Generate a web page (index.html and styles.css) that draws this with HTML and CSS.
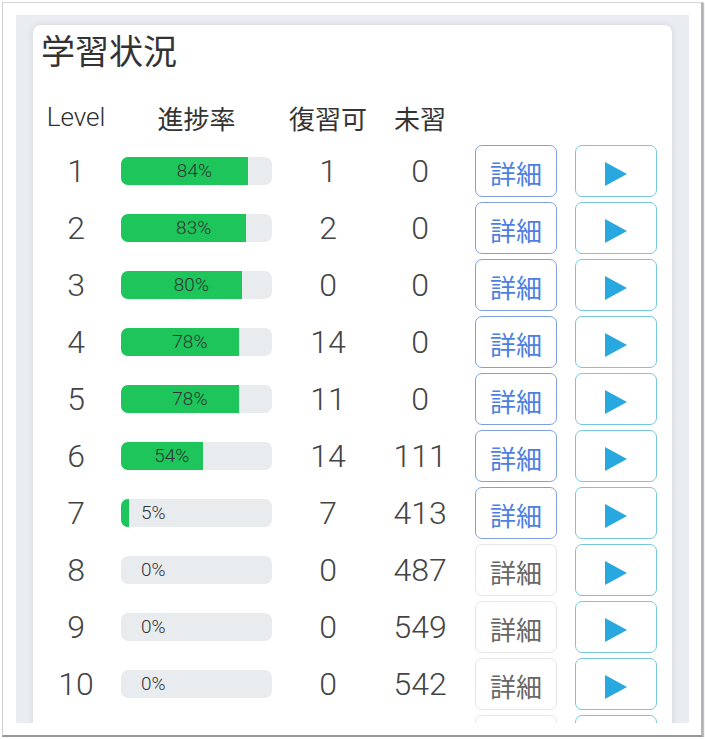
FILE: index.html
```html
<!DOCTYPE html>
<html lang="ja">
<head>
<meta charset="utf-8">
<link rel="stylesheet" href="styles.css">
</head>
<body>
<div class="frame">
  <div class="panel">
    <div class="card">
      <h1 class="title">学習状況</h1>
      <div class="row head">
        <div class="h-level">Level</div>
        <div>進捗率</div>
        <div>復習可</div>
        <div>未習</div>
        <div></div>
        <div></div>
      </div>

      <div class="row">
        <div class="num">1</div>
        <div class="bar" style="--p:84%"><div class="fill"></div><div class="lbl">84%</div></div>
        <div class="num">1</div>
        <div class="num">0</div>
        <button class="btn detail">詳細</button>
        <button class="btn play"><svg width="22" height="24" viewBox="0 0 22 24"><polygon points="0,0 22,12 0,24"/></svg></button>
      </div>
      <div class="row">
        <div class="num">2</div>
        <div class="bar" style="--p:83%"><div class="fill"></div><div class="lbl">83%</div></div>
        <div class="num">2</div>
        <div class="num">0</div>
        <button class="btn detail">詳細</button>
        <button class="btn play"><svg width="22" height="24" viewBox="0 0 22 24"><polygon points="0,0 22,12 0,24"/></svg></button>
      </div>
      <div class="row">
        <div class="num">3</div>
        <div class="bar" style="--p:80%"><div class="fill"></div><div class="lbl">80%</div></div>
        <div class="num">0</div>
        <div class="num">0</div>
        <button class="btn detail">詳細</button>
        <button class="btn play"><svg width="22" height="24" viewBox="0 0 22 24"><polygon points="0,0 22,12 0,24"/></svg></button>
      </div>
      <div class="row">
        <div class="num">4</div>
        <div class="bar" style="--p:78%"><div class="fill"></div><div class="lbl">78%</div></div>
        <div class="num">14</div>
        <div class="num">0</div>
        <button class="btn detail">詳細</button>
        <button class="btn play"><svg width="22" height="24" viewBox="0 0 22 24"><polygon points="0,0 22,12 0,24"/></svg></button>
      </div>
      <div class="row">
        <div class="num">5</div>
        <div class="bar" style="--p:78%"><div class="fill"></div><div class="lbl">78%</div></div>
        <div class="num">11</div>
        <div class="num">0</div>
        <button class="btn detail">詳細</button>
        <button class="btn play"><svg width="22" height="24" viewBox="0 0 22 24"><polygon points="0,0 22,12 0,24"/></svg></button>
      </div>
      <div class="row">
        <div class="num">6</div>
        <div class="bar" style="--p:54%"><div class="fill"></div><div class="lbl">54%</div></div>
        <div class="num">14</div>
        <div class="num">111</div>
        <button class="btn detail">詳細</button>
        <button class="btn play"><svg width="22" height="24" viewBox="0 0 22 24"><polygon points="0,0 22,12 0,24"/></svg></button>
      </div>
      <div class="row">
        <div class="num">7</div>
        <div class="bar" style="--p:5%"><div class="fill"></div><div class="lbl">5%</div></div>
        <div class="num">7</div>
        <div class="num">413</div>
        <button class="btn detail">詳細</button>
        <button class="btn play"><svg width="22" height="24" viewBox="0 0 22 24"><polygon points="0,0 22,12 0,24"/></svg></button>
      </div>
      <div class="row">
        <div class="num">8</div>
        <div class="bar" style="--p:0%"><div class="fill"></div><div class="lbl">0%</div></div>
        <div class="num">0</div>
        <div class="num">487</div>
        <button class="btn detail off">詳細</button>
        <button class="btn play"><svg width="22" height="24" viewBox="0 0 22 24"><polygon points="0,0 22,12 0,24"/></svg></button>
      </div>
      <div class="row">
        <div class="num">9</div>
        <div class="bar" style="--p:0%"><div class="fill"></div><div class="lbl">0%</div></div>
        <div class="num">0</div>
        <div class="num">549</div>
        <button class="btn detail off">詳細</button>
        <button class="btn play"><svg width="22" height="24" viewBox="0 0 22 24"><polygon points="0,0 22,12 0,24"/></svg></button>
      </div>
      <div class="row">
        <div class="num">10</div>
        <div class="bar" style="--p:0%"><div class="fill"></div><div class="lbl">0%</div></div>
        <div class="num">0</div>
        <div class="num">542</div>
        <button class="btn detail off">詳細</button>
        <button class="btn play"><svg width="22" height="24" viewBox="0 0 22 24"><polygon points="0,0 22,12 0,24"/></svg></button>
      </div>
      <div class="row">
        <div></div>
        <div></div>
        <div></div>
        <div></div>
        <button class="btn detail off"></button>
        <button class="btn play"></button>
      </div>
    </div>
  </div>
</div>
</body>
</html>
```

FILE: styles.css
```css
html, body {
  margin: 0;
  padding: 0;
  background: #ffffff;
}

body {
  font-family: Roboto, "Noto Sans CJK JP", sans-serif;
  color: #333333;
}

.frame {
  box-sizing: border-box;
  width: 701px;
  height: 735px;
  margin: 2px 0 0 2px;
  padding: 12px 11px 10px 13px;
  background: #ffffff;
  border-top: 1px solid #d6d6d6;
  border-left: 1px solid #cfcfcf;
  border-right: 2px solid #b4b4b4;
  border-bottom: 2px solid #979797;
  box-shadow: 1px 1px 1px rgba(0, 0, 0, 0.25);
}

.panel {
  box-sizing: border-box;
  width: 673px;
  height: 708px;
  padding: 10px 17px 0 17px;
  background: #e9ecf0;
  overflow: hidden;
}

.card {
  background: #ffffff;
  border-radius: 8px;
  box-shadow: 0 0 7px rgba(0, 0, 0, 0.10);
  padding-top: 5px;
  padding-bottom: 20px;
}

.title {
  margin: 0 0 22px 8px;
  font-family: "Noto Sans CJK JP", sans-serif;
  font-weight: 400;
  font-size: 34px;
  line-height: 40px;
  color: #333333;
}

.row {
  display: grid;
  grid-template-columns: 86px 155px 108px 76px 99px 100px;
  height: 57px;
  align-items: center;
  justify-items: center;
}

.row.head {
  height: 50px;
  font-family: "Noto Sans CJK JP", sans-serif;
  font-size: 26px;
  color: #333333;
}

.row.head .h-level {
  font-family: Roboto, sans-serif;
  font-weight: 300;
  color: #2e2e2e;
}

.num {
  font-family: Roboto, sans-serif;
  font-weight: 300;
  font-size: 32px;
  color: #444444;
  line-height: 1;
}

.bar {
  display: grid;
  width: 151px;
  height: 28px;
  border-radius: 7px;
  background: #e9ecef;
  overflow: hidden;
  justify-self: center;
}

.bar .fill,
.bar .lbl {
  grid-area: 1 / 1;
  width: var(--p);
  height: 28px;
}

.bar .fill {
  background: #1dc55b;
}

.bar .lbl {
  box-sizing: border-box;
  padding-left: 20px;
  text-align: center;
  white-space: nowrap;
  font-family: Roboto, sans-serif;
  font-weight: 300;
  font-size: 19px;
  line-height: 27px;
  color: #333333;
}

.btn {
  box-sizing: border-box;
  width: 82px;
  height: 52px;
  margin: 0;
  padding: 0;
  background: #ffffff;
  border-radius: 7px;
  justify-self: end;
  display: flex;
  align-items: center;
  justify-content: center;
  cursor: pointer;
}

.detail {
  border: 1px solid #7f9fe0;
  color: #4d7fe2;
  font-family: "Noto Sans CJK JP", sans-serif;
  font-size: 26px;
  padding-top: 4px;
}

.detail.off {
  border-color: #e6e6e6;
  color: #676767;
}

.play {
  border: 1px solid #76c6df;
  padding-top: 6px;
}

.play svg {
  display: block;
  fill: #29a8e0;
}
```
